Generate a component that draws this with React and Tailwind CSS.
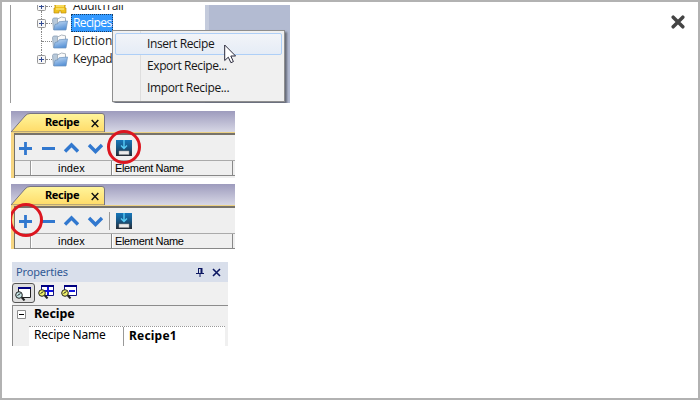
const tahoma = "font-['Noto_Sans','DejaVu_Sans',sans-serif]";
const segoe = "font-['Open_Sans','Noto_Sans',sans-serif]";
const arial = "font-['Liberation_Sans',sans-serif]";

function Folder() {
  return (
    <svg width="16" height="15" viewBox="0 0 16 15" className="shrink-0">
      <defs>
        <linearGradient id="folder" x1="0" y1="0" x2="0.4" y2="1">
          <stop offset="0" stopColor="#c9ddf3" />
          <stop offset="1" stopColor="#5b95d8" />
        </linearGradient>
      </defs>
      <path d="M.5 3.5 1.5 2h4l1 1.5 7 0v10h-12z" fill="#b8c9da" stroke="#8ba0b5" strokeWidth=".8" />
      <path d="M5.5 3 9.5 1l4 .8V8h-8z" fill="#fafafa" stroke="#9aa4ae" strokeWidth=".8" />
      <path d="M1.8 14 3 8.5 6 7.7 7 5.8 15.5 5 14 14z" fill="url(#folder)" stroke="#6890bd" strokeWidth=".7" />
    </svg>
  );
}

function Expander() {
  return (
    <svg width="9" height="9" viewBox="0 0 9 9" className="shrink-0">
      <rect x=".5" y=".5" width="8" height="8" rx="1" fill="#f7f7f7" stroke="#979797" />
      <path d="M2 4.5h5M4.5 2v5" stroke="#334b92" />
    </svg>
  );
}

function TreeRow({ label, expandable, selected, icon, last, tracking = "tracking-[-0.35px]" }) {
  return (
    <div className="flex h-[18px] items-center pl-[26px]">
      <div className="flex w-[9px] shrink-0 flex-col items-center self-stretch">
        <div className="w-0 flex-1 border-l border-dotted border-[#888]" />
        {expandable && <Expander />}
        <div className={last ? "flex-1" : "w-0 flex-1 border-l border-dotted border-[#888]"} />
      </div>
      <div className={expandable ? "w-[6px] shrink-0 border-t border-dotted border-[#888]" : "-ml-1 w-[10px] shrink-0 border-t border-dotted border-[#888]"} />
      {icon || <Folder />}
      <div className={`flex h-[18px] items-center text-[12px] whitespace-nowrap ${selected ? "ml-[3px] h-[17px] border border-dotted border-[#173e66] bg-[#3399ff] pl-px text-white" : "ml-[4px] px-[1px] text-[#222]"} ${tracking}`}>
        {label}
      </div>
    </div>
  );
}

function AuditIcon() {
  return (
    <svg width="16" height="15" viewBox="0 0 16 15" className="shrink-0">
      <path d="M2 1h5v3h2V1h5v5h-1v3h1v5H9v-2H7v2H2V9h1V6H2z" fill="#efc21d" stroke="#bd8d10" strokeWidth=".7" />
      <path d="M4 7h8M4 10h8" stroke="#fff2a0" />
    </svg>
  );
}

function TreePanel() {
  return (
    <div className={`relative flex h-[98px] w-[280px] overflow-hidden bg-white ${segoe}`}>
      <div className="w-[195px] overflow-hidden border-l border-[#9b9b9b]">
        <div className="-mt-[8px]">
          <TreeRow label="AuditTrail" expandable icon={<AuditIcon />} />
          <div className="-mt-px">
            <TreeRow label="Recipes" expandable selected tracking="tracking-[-0.6px]" />
          </div>
          <TreeRow label="Dictionaries" tracking="tracking-[0px]" />
          <TreeRow label="Keypads" expandable last />
        </div>
      </div>
      <div className="flex-1 border-l-4 border-[#c4cbdc] bg-[#b3bbd2]" />
      <div className="absolute top-[25px] left-[102px] flex h-[72px] w-[173px] flex-col border border-[#8e8e8e] bg-[linear-gradient(90deg,#f1f1f1_27px,#dedede_27px,#dedede_28px,#f0f0f0_28px)] p-[2px] text-[12px] text-[#151515] shadow-[2px_2px_2px_#666b78]">
        <div className="flex h-[22px] items-center rounded-[2px] border border-[#aecff7] bg-[linear-gradient(#f2f4f8,#e5ecf6)] pl-[31px] tracking-[-0.4px]">Insert Recipe</div>
        <div className="flex h-[22px] items-center pl-[32px] tracking-[-0.4px]">Export Recipe...</div>
        <div className="flex h-[22px] items-center pl-[32px] tracking-[-0.35px]">Import Recipe...</div>
      </div>
      <svg width="13" height="20" viewBox="0 0 13 20" className="absolute top-[39px] left-[214px]">
        <path d="M.7 1v15.5l3.6-3.3 2.6 5.5 2.5-1.1L6.8 12h4.8z" fill="#fff" stroke="#29293b" />
      </svg>
    </div>
  );
}

function SaveIcon() {
  return (
    <svg width="16" height="16" viewBox="0 0 16 16" className="shrink-0">
      <defs>
        <linearGradient id="save" x1="0" y1="0" x2="0" y2="1">
          <stop offset="0" stopColor="#1777ba" />
          <stop offset=".5" stopColor="#185684" />
          <stop offset="1" stopColor="#262b33" />
        </linearGradient>
      </defs>
      <path d="M0 0h16v16H0z" fill="url(#save)" />
      <path d="M8 0v8M5 5.5l3 3 3-3" fill="none" stroke="#58ccf5" strokeWidth="1.4" />
      <path d="M3 11h10v3.5H3z" fill="#ececec" stroke="#9a9a9a" strokeWidth=".5" />
    </svg>
  );
}

function Ring({ className }) {
  return <div className={`absolute rounded-full border-[#dc1620] ${className}`} />;
}

function RecipePanel({ divider, ring, className }) {
  return (
    <div className={`relative ml-px flex w-[224px] flex-col overflow-hidden bg-[#efefef] ${className}`}>
      <div className="flex h-[21px] shrink-0 bg-[linear-gradient(#9d9bbd,#d7d7e5)]">
        <div className="relative h-[21px] w-[94px]">
          <svg width="94" height="21" viewBox="0 0 94 21" className="absolute inset-0">
            <defs>
              <linearGradient id="tab" x1="0" y1="0" x2="0" y2="1">
                <stop offset="0" stopColor="#fff59c" />
                <stop offset="1" stopColor="#ffdb68" />
              </linearGradient>
            </defs>
            <path d="M0 21 14 5Q16 2.5 19 2.5H91Q93.5 2.5 93.5 5V21z" fill="url(#tab)" stroke="#777481" />
          </svg>
          <div className={`relative flex h-[20px] items-center pt-[2px] pl-[34px] text-black ${tahoma}`}>
            <span className="w-[46px] text-[11px] font-bold tracking-[-0.35px]">Recipe</span>
            <svg width="9" height="9" viewBox="0 0 9 9" className="mt-[2px]">
              <path d="m.7 1 6.6 7M7.3 1 .7 8" stroke="#111" strokeWidth="1.4" />
            </svg>
          </div>
        </div>
      </div>
      <div className="h-px shrink-0 bg-[#ecd184]" />
      <div className="flex min-h-0 flex-1 border-l-[3px] border-[#f7d681]">
        <div className="flex flex-1 flex-col border-t-2 border-l border-[#77736b]">
          <div className="flex h-[25px] shrink-0 items-center pl-[4px]">
            <svg width="86" height="14" viewBox="0 0 86 14" className="shrink-0" fill="none" stroke="#3178cf" strokeWidth="2.8">
              <path d="M0 7.5h13M6.5 1v13M23 7.5h13" />
              <path d="m46 10.5 6.5-6.5 6.5 6.5M70 4l6.5 6.5L83 4" strokeWidth="3.4" />
            </svg>
            <div className={divider ? "ml-[4px] h-[18px] w-px bg-[#999]" : "ml-[4px] h-[18px] w-px"} />
            <div className="ml-[6px] pt-[1px]"><SaveIcon /></div>
          </div>
          <div className={`flex h-[16px] shrink-0 border-y border-t-[#aaa] border-b-[#888] text-[11px] text-black ${arial}`}>
            <div className="w-[16px] border-r border-[#999]" />
            <div className="flex w-[81px] items-center justify-center border-r border-l border-l-white border-[#888] tracking-[0.1px]">index</div>
            <div className="flex w-[121px] items-center border-r border-l border-l-white border-[#888] pl-[2px] tracking-[-0.35px] whitespace-nowrap">Element Name</div>
          </div>
        </div>
      </div>
      {ring}
    </div>
  );
}

function PropIcon({ sign, yellow }) {
  return (
    <svg width="17" height="15" viewBox="0 0 17 15" className="shrink-0">
      <path d="M3.5 1.5h12v10h-12z" fill="#fff" stroke={yellow ? "#111180" : "#222"} />
      <path d="M3 1h13v2H3z" fill="#000080" />
      {sign && <path d={sign} stroke="#1414e0" strokeWidth="2" />}
      <path d="m6.5 11 3 3.5" stroke="#222" strokeWidth="2" />
      <circle cx="4" cy="9" r="3.3" fill={yellow ? "#eef06a" : "#c4e4e4"} stroke="#222" />
      <path d="m2.5 9.5 3-2" stroke="#222" />
    </svg>
  );
}

function PropertiesPanel() {
  return (
    <div className={`mt-[13px] ml-[2px] flex h-[84px] w-[216px] flex-col overflow-hidden bg-[#f0f0f0] ${tahoma}`}>
      <div className="flex h-[20px] shrink-0 items-center bg-[#d9dfeb] pr-[7px] pl-[4px] text-[11px] text-[#315995]">
        <span className="flex-1 tracking-[-0.15px]">Properties</span>
        <svg width="9" height="10" viewBox="0 0 9 10" className="mr-[7px]" fill="none" stroke="#0c1762">
          <path d="M2.5 1v5M2 1.5h4M0 6.5h8M4 7v3" />
          <path d="M5.5 1v5" strokeWidth="2" />
        </svg>
        <svg width="9" height="9" viewBox="0 0 9 9">
          <path d="m1 1 7 7M8 1 1 8" stroke="#0c1762" strokeWidth="1.6" />
        </svg>
      </div>
      <div className="flex h-[23px] shrink-0 items-start pt-[1px]">
        <div className="flex h-[20px] w-[23px] items-center justify-center rounded-[3px] border border-[#555] bg-[#dedede]">
          <PropIcon />
        </div>
        <div className="ml-[3px] pt-[1px]"><PropIcon yellow sign="M10 3v8M6 7h9" /></div>
        <div className="ml-[6px] pt-[1px]"><PropIcon yellow sign="M8 7h6" /></div>
      </div>
      <div className="flex flex-1 flex-col border-t border-l border-[#8c8c8c] text-black">
        <div className="flex h-[20px] shrink-0 items-center pl-[4px]">
          <svg width="9" height="9" viewBox="0 0 9 9" className="-mt-[4px]">
            <path d="M.5.5h8v8h-8z" fill="#fff" stroke="#8c8c8c" />
            <path d="M2 4.5h5" stroke="#000" />
          </svg>
          <span className="-mt-[3px] ml-[8px] text-[12.5px] font-bold tracking-[-0.1px]">Recipe</span>
        </div>
        <div className="flex flex-1 pr-[3px] pl-[16px]">
          <div className="flex flex-1 border-t border-dotted border-[#999] bg-white text-[12px] leading-[16px]">
            <div className="w-[95px] border-r border-solid border-[#999] pl-[5px] tracking-[-0.25px]">Recipe Name</div>
            <div className="pt-[1px] pl-[5px] font-bold tracking-[0.2px]">Recipe1</div>
          </div>
        </div>
      </div>
    </div>
  );
}

export default function App() {
  return (
    <div className="flex h-[400px] w-[700px] items-start justify-between overflow-hidden border-2 border-[#b2b2b2] bg-white pt-[3px] pr-[13px] pl-[8px]">
      <div className="flex flex-col">
        <TreePanel />
        <RecipePanel className="mt-[8px] h-[67px]" ring={<Ring className="top-[19px] left-[96px] size-[34px] border-3" />} />
        <RecipePanel className="mt-[6px] h-[65px]" divider ring={<Ring className="top-[19px] left-[-2px] size-[34px] border-3" />} />
        <PropertiesPanel />
      </div>
      <svg width="14" height="14" viewBox="0 0 14 14" className="mt-[10px]">
        <path d="m2.2 2.2 9.6 9.6M11.8 2.2l-9.6 9.6" stroke="#444" strokeWidth="3.5" strokeLinecap="round" />
      </svg>
    </div>
  );
}
